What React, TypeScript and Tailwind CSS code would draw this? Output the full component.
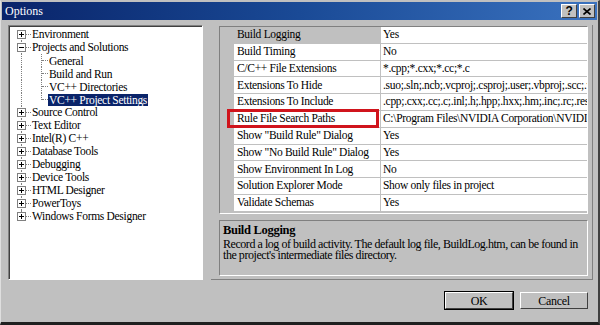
const serif = "font-['Liberation_Serif','Times_New_Roman',serif]";

type TreeItem = {
  label: string;
  kind: "plus" | "minus" | "child";
  selected?: boolean;
  last?: boolean;
};

const tree: TreeItem[] = [
  { label: "Environment", kind: "plus" },
  { label: "Projects and Solutions", kind: "minus" },
  { label: "General", kind: "child" },
  { label: "Build and Run", kind: "child" },
  { label: "VC++ Directories", kind: "child" },
  { label: "VC++ Project Settings", kind: "child", selected: true, last: true },
  { label: "Source Control", kind: "plus" },
  { label: "Text Editor", kind: "plus" },
  { label: "Intel(R) C++", kind: "plus" },
  { label: "Database Tools", kind: "plus" },
  { label: "Debugging", kind: "plus" },
  { label: "Device Tools", kind: "plus" },
  { label: "HTML Designer", kind: "plus" },
  { label: "PowerToys", kind: "plus" },
  { label: "Windows Forms Designer", kind: "plus" },
];

const props: [string, string][] = [
  ["Build Logging", "Yes"],
  ["Build Timing", "No"],
  ["C/C++ File Extensions", "*.cpp;*.cxx;*.cc;*.c"],
  ["Extensions To Hide", ".suo;.sln;.ncb;.vcproj;.csproj;.user;.vbproj;.scc;.vssscc;.vspscc"],
  ["Extensions To Include", ".cpp;.cxx;.cc;.c;.inl;.h;.hpp;.hxx;.hm;.inc;.rc;.resx;.idl"],
  ["Rule File Search Paths", "C:\\Program Files\\NVIDIA Corporation\\NVIDIA CUDA"],
  ['Show "Build Rule" Dialog', "Yes"],
  ['Show "No Build Rule" Dialog', "Yes"],
  ["Show Environment In Log", "No"],
  ["Solution Explorer Mode", "Show only files in project"],
  ["Validate Schemas", "Yes"],
];

function ExpandBox({ open }: { open: boolean }) {
  return (
    <div className="w-[9px] h-[9px] border border-[#808080] bg-white flex items-center justify-center relative z-10">
      <svg width="7" height="7" viewBox="0 0 7 7">
        <path d="M1 3.5 H6" stroke="#000" strokeWidth="1" />
        {!open && <path d="M3.5 1 V6" stroke="#000" strokeWidth="1" />}
      </svg>
    </div>
  );
}

function TreeRow({ item, index }: { item: TreeItem; index: number }) {
  const isTop = item.kind !== "child";
  const lastTop = index === tree.length - 1;
  return (
    <div className="h-[13px] flex items-center relative">
      {/* vertical connector for top-level items */}
      <div
        className={`absolute left-[11px] w-0 border-l border-dotted border-[#808080] ${
          index === 0 ? "top-[6px]" : "top-0"
        } ${lastTop ? "h-[6px]" : "bottom-0"}`}
      />
      {isTop ? (
        <>
          <div className="ml-[7px]">
            <ExpandBox open={item.kind === "minus"} />
          </div>
          <div className="w-[5px] border-t border-dotted border-[#808080] mr-[1px]" />
          <span className="whitespace-nowrap leading-[13px]">{item.label}</span>
        </>
      ) : (
        <>
          <div
            className={`absolute left-[31px] top-0 w-0 border-l border-dotted border-[#808080] ${
              item.last ? "h-[7px]" : "bottom-0"
            }`}
          />
          <div className="ml-[32px] w-[6px] border-t border-dotted border-[#808080]" />
          <span
            className={`whitespace-nowrap leading-[12px] px-[1px] ${
              item.selected ? "bg-[#0a246a] text-white" : ""
            }`}
          >
            {item.label}
          </span>
        </>
      )}
    </div>
  );
}

function CaptionButton({ children }: { children: React.ReactNode }) {
  return (
    <div className="w-[16px] h-[14px] bg-[#c0c0c0] border-t border-l border-white border-b border-r border-b-[#404040] border-r-[#404040] flex items-center justify-center">
      {children}
    </div>
  );
}

function Button({ label, isDefault }: { label: string; isDefault?: boolean }) {
  return (
    <div
      className={`w-[70px] h-[19px] ${
        isDefault ? "border border-black" : "border border-transparent"
      }`}
    >
      <div className="w-full h-full bg-[#c0c0c0] border-t border-l border-white border-b border-r border-b-[#404040] border-r-[#404040] flex items-center justify-center text-[12px]">
        {label}
      </div>
    </div>
  );
}

export default function App() {
  return (
    <div
      className={`${serif} w-[600px] h-[325px] bg-[#c0c0c0] text-black text-[11.5px] tracking-[-0.3px] border-t border-l border-t-[#c0c0c0] border-l-[#dfdfdf] border-r-[2px] border-b-[3px] border-r-[#404040] border-b-[#202020] flex flex-col overflow-hidden`}
    >
      {/* Title bar */}
      <div className="mx-[1px] mt-[1px] h-[18px] bg-gradient-to-r from-[#0a246a] via-[#1a4a96] to-[#3a72bf] flex items-center pl-[3px] pr-[2px]">
        <span className="text-white text-[12px] tracking-normal">Options</span>
        <div className="ml-auto flex gap-[2px]">
          <CaptionButton>
            <span className="text-[12px] font-bold leading-none font-['Liberation_Sans',sans-serif]">?</span>
          </CaptionButton>
          <CaptionButton>
            <svg width="8" height="7" viewBox="0 0 8 7">
              <path d="M0.5 0.5 L7.5 6.5 M7.5 0.5 L0.5 6.5" stroke="#000" strokeWidth="1.6" />
            </svg>
          </CaptionButton>
        </div>
      </div>

      {/* Body */}
      <div className="flex pl-[7px] pt-[5px] h-[258px]">
        {/* Tree */}
        <div className="w-[195px] h-[255px] border-t border-l border-[#808080] border-b border-r border-b-white border-r-white">
          <div className="w-full h-full bg-white border-t border-l border-[#404040] border-b-0 border-r-0 pt-[1px]">
            {tree.map((item, i) => (
              <TreeRow key={item.label} item={item} index={i} />
            ))}
          </div>
        </div>

        {/* Right panel */}
        <div className="ml-[8px] w-[382px] h-[255px] border-r border-b border-r-[#808080] border-b-[#808080] flex flex-col pl-[8px] pr-[4px]">
          <div className="mt-[1px] h-[188px] border border-t-[#808080] border-l-[#808080] border-b-white border-r-white relative">
            <div className="flex flex-col">
              {props.map(([name, value], i) => (
                <div key={name} className="h-[16.8px] flex">
                  <div className="w-[14px] bg-[#c0c0c0]" />
                  <div
                    className={`w-[147px] pl-[3px] flex items-center border-b border-r border-[#c0c0c0] whitespace-nowrap overflow-hidden ${
                      i === 0 ? "bg-[#c0c0c0]" : "bg-white"
                    }`}
                  >
                    {name}
                  </div>
                  <div className="flex-1 min-w-0 pl-[2px] flex items-center bg-white border-b border-[#c0c0c0] whitespace-nowrap overflow-hidden">
                    {value}
                  </div>
                </div>
              ))}
            </div>
            {/* annotation box */}
            <div className="absolute left-[7px] top-[82px] w-[152px] h-[19px] border-[3px] border-[#d0141c]" />
          </div>

          <div className="mt-[6px] h-[56px] border border-t-[#808080] border-l-[#808080] border-b-white border-r-white px-[3px] pt-[2px]">
            <div className="font-bold text-[12.5px] leading-[14px]">Build Logging</div>
            <div className="leading-[11px] text-[12px] tracking-[-0.45px] mt-[2px]">
              Record a log of build activity. The default log file, BuildLog.htm, can be found in the
              project's intermediate files directory.
            </div>
          </div>
        </div>
      </div>

      {/* Buttons */}
      <div className="flex justify-end gap-[5px] pr-[9px] mt-[13px]">
        <Button label="OK" isDefault />
        <Button label="Cancel" />
      </div>
    </div>
  );
}
